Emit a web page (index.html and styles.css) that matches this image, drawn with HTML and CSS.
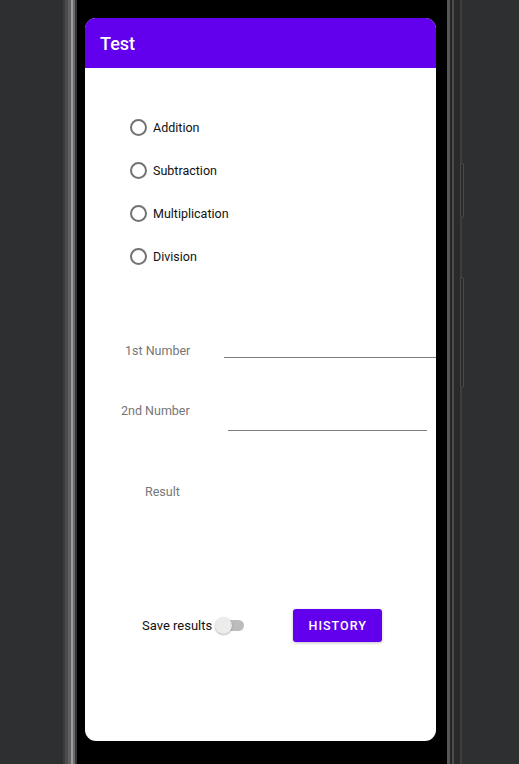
FILE: index.html
```html
<!DOCTYPE html>
<html lang="en">

<head>
    <meta charset="UTF-8">
    <meta name="viewport" content="width=device-width, initial-scale=1.0">
    <title>Test</title>
    <link rel="stylesheet" href="styles.css">
</head>

<body>
    <div class="device">
        <span class="side_button volume"></span>
        <span class="side_button power"></span>

        <main class="screen">
            <header class="app_bar">
                <h1>Test</h1>
            </header>

            <section class="operacoes">
                <label class="radio"><span class="circulo"></span>Addition</label>
                <label class="radio"><span class="circulo"></span>Subtraction</label>
                <label class="radio"><span class="circulo"></span>Multiplication</label>
                <label class="radio"><span class="circulo"></span>Division</label>
            </section>

            <section class="campo campo_1">
                <span class="rotulo">1st Number</span>
                <span class="linha"></span>
            </section>

            <section class="campo campo_2">
                <span class="rotulo">2nd Number</span>
                <span class="linha"></span>
            </section>

            <p class="resultado">Result</p>

            <section class="rodape">
                <span class="salvar">Save results</span>
                <span class="switch"><span class="thumb"></span></span>
                <button class="botao">History</button>
            </section>
        </main>
    </div>
</body>

</html>
```

FILE: styles.css
```css
* {
    margin: 0;
    padding: 0;
    box-sizing: border-box;
    font-family: "Roboto", sans-serif;
}

html,
body {
    width: 100%;
    height: 100%;
    overflow: hidden;
}

body {
    background-color: #2e2f31;
}

/* --------------------- Aparelho --------------------- */

.device {
    position: relative;
    width: 399px;
    height: 764px;
    margin-left: 63px;
    padding: 18px 26px 0 22px;
    background: linear-gradient(to right,
            #3b3c3e 0, #3b3c3e 2px,
            #4b4b4c 2px, #4b4b4c 5px,
            #606062 5px, #606062 8px,
            #9c9c9e 8px, #9c9c9e 10px,
            #6b6b6d 10px, #6b6b6d 12px,
            #353536 12px, #353536 14px,
            #000 14px, #000 384px,
            #565658 384px, #565658 387px,
            #242425 387px, #242425 389px,
            #4c4c4e 389px, #4c4c4e 391px,
            #2a2a2b 391px, #2a2a2b 397px,
            #3c3d3f 397px, #3c3d3f 399px);
}

.side_button {
    position: absolute;
    left: 397px;
    width: 4px;
    background-color: #2a2a2b;
    border: 1px solid #4a4a4c;
    border-radius: 2px;
}

.volume {
    top: 163px;
    height: 55px;
}

.power {
    top: 277px;
    height: 111px;
}

/* --------------------- Tela --------------------- */

.screen {
    width: 351px;
    height: 723px;
    background-color: #fff;
    border-radius: 11px;
    overflow: hidden;
    display: flex;
    flex-direction: column;
}

.app_bar {
    height: 50px;
    padding-left: 15px;
    display: flex;
    align-items: center;
    background-color: #6200ee;
}

.app_bar h1 {
    color: #fff;
    font-size: 18px;
    font-weight: 500;
}

/* --------------------- Operações --------------------- */

.operacoes {
    margin-top: 38px;
    padding-left: 45px;
    display: flex;
    flex-direction: column;
}

.radio {
    height: 43px;
    display: flex;
    align-items: center;
    column-gap: 6px;
    font-size: 12.5px;
    color: #111;
}

.circulo {
    width: 17px;
    height: 17px;
    border: 2px solid #737373;
    border-radius: 50%;
}

/* --------------------- Campos --------------------- */

.campo {
    display: flex;
    align-items: flex-start;
}

.rotulo {
    line-height: 20px;
    font-size: 12.5px;
    color: #767676;
}

.linha {
    flex: 1;
    border-bottom: 1px solid #7d7d7d;
}

.campo_1 {
    margin-top: 63px;
    padding-left: 40px;
}

.campo_1 .rotulo {
    width: 99px;
}

.campo_1 .linha {
    height: 17px;
}

.campo_2 {
    margin-top: 40px;
    padding-left: 36px;
    padding-right: 9px;
}

.campo_2 .rotulo {
    width: 107px;
}

.campo_2 .linha {
    height: 30px;
}

.resultado {
    margin-top: 51px;
    padding-left: 60px;
    line-height: 20px;
    font-size: 12.5px;
    color: #767676;
}

/* --------------------- Rodapé --------------------- */

.rodape {
    margin-top: 107px;
    padding-left: 57px;
    display: flex;
    align-items: center;
}

.salvar {
    font-size: 13px;
    color: #111;
}

.switch {
    position: relative;
    width: 28px;
    height: 11px;
    margin-left: 4px;
    border-radius: 6px;
    background-color: #bcbcbc;
}

.thumb {
    position: absolute;
    left: -1px;
    top: -3px;
    width: 17px;
    height: 17px;
    border-radius: 50%;
    background-color: #ececec;
    box-shadow: 0 1px 2px rgba(0, 0, 0, 0.3);
}

.botao {
    width: 89px;
    height: 33px;
    margin-left: 49px;
    border: none;
    border-radius: 3px;
    background-color: #6200ee;
    color: #fff;
    font-size: 12.5px;
    font-weight: 500;
    letter-spacing: 1px;
    text-transform: uppercase;
    box-shadow: 0 1px 3px rgba(0, 0, 0, 0.25);
}
```
